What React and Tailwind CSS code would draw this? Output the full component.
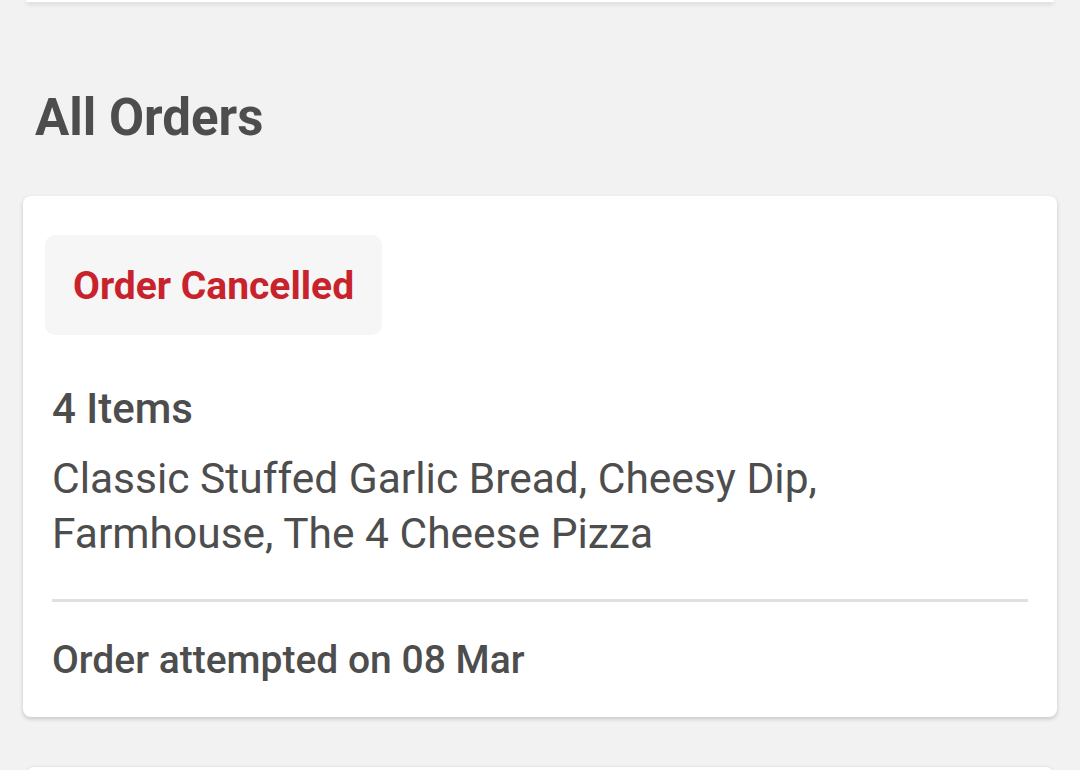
import React from 'react';

const OrderCard = ({ status, count, items, footer }) => {
  return (
    <div className="mx-[23px] bg-white rounded-lg shadow-[0_2px_4px_rgba(0,0,0,0.18)] px-[22px] pt-[39px] pb-[32px]">
      <div className="inline-flex items-center h-[100px] px-[28px] pt-[3px] bg-[#f6f6f6] rounded-[10px]">
        <span className="text-[39px] font-bold text-[#c8232c]">{status}</span>
      </div>
      <div className="px-[7px]">
        <p className="mt-[50px] text-[42px] font-medium leading-[48px] text-[#4d4d4d]">{count}</p>
        <p className="mt-[18px] text-[42.5px] leading-[55px] text-[#4d4d4d]">{items}</p>
        <div className="mt-[38px] h-[3px] bg-[#e0e0e0]" />
        <p className="mt-[33px] text-[39px] font-medium leading-[50px] text-[#4d4d4d]">{footer}</p>
      </div>
    </div>
  );
};

const App = () => {
  return (
    <div className="w-[1080px] h-[770px] overflow-hidden bg-[#f2f2f2] font-['Roboto',sans-serif]">
      <div className="mx-[26px] h-[2px] bg-white rounded-b-lg shadow-[0_2px_4px_rgba(0,0,0,0.18)]" />
      <h1 className="mt-[84px] ml-[35px] text-[51px] font-bold leading-[64px] text-[#4d4d4d]">All Orders</h1>
      <div className="mt-[46px]">
        <OrderCard
          status="Order Cancelled"
          count="4 Items"
          items={<>Classic Stuffed Garlic Bread, Cheesy Dip,<br />Farmhouse, The 4 Cheese Pizza</>}
          footer="Order attempted on 08 Mar"
        />
      </div>
      <div className="mt-[50px] mx-[26px] h-[10px] bg-white rounded-t-lg shadow-[0_0_3px_rgba(0,0,0,0.12)]" />
    </div>
  );
};

export default App;
